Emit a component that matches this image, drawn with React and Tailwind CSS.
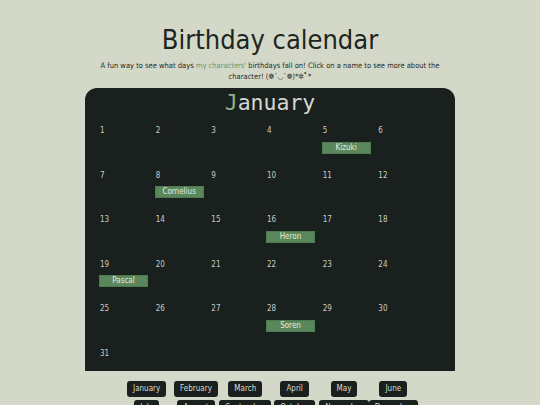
import React from "react";

const birthdays = {
  5: "Kizuki",
  8: "Cornelius",
  16: "Heron",
  19: "Pascal",
  28: "Soren",
};

const months = [
  "January", "February", "March", "April", "May", "June",
  "July", "August", "September", "October", "November", "December",
];

function DayCell({ day }) {
  const name = birthdays[day];
  return (
    <div className="h-[44.6px] flex flex-col items-start">
      <span className="text-[8px] leading-[10px] text-[#c9ccc5] pl-[1px]">{day}</span>
      {name && (
        <button className="mt-[5.5px] w-[49px] h-[12px] bg-[#5a875c] border border-[#4d7a50] text-[#e4ecdf] text-[8px] leading-[10px] text-center">
          {name}
        </button>
      )}
    </div>
  );
}

export default function App() {
  const days = Array.from({ length: 31 }, (_, i) => i + 1);

  return (
    <div className="min-h-[405px] bg-[#d4d8c9] font-['DejaVu_Sans',sans-serif] [font-stretch:condensed] text-[#1d2420] overflow-hidden">
      <h1 className="pt-[24px] text-center text-[27px] leading-[31px] text-[#1c2520]">Birthday calendar</h1>
      <p className="mt-[5px] mx-auto w-[346px] text-center text-[7.5px] leading-[11px] text-[#252b26]">
        A fun way to see what days <a className="text-[#6b956b]">my characters'</a> birthdays fall on! Click on a name to see more about the character! (❁´◡`❁)*✲ﾟ*
      </p>

      <div className="mx-auto mt-[6px] w-[370px] h-[283px] bg-[#1a201d] rounded-t-[12px] pt-[1px] pl-[14px]">
        <h2 className="text-center font-['DejaVu_Sans_Mono',monospace] text-[21.5px] leading-[28px] text-[#d3d8d0] pr-[14px]">
          <span className="text-[#8fb08a]">J</span>anuary
        </h2>
        <div className="mt-[9px] w-[334px] grid grid-cols-6">
          {days.map((d) => (
            <DayCell key={d} day={d} />
          ))}
        </div>
      </div>

      <div className="mx-auto mt-[10px] w-[296px] grid grid-cols-6 gap-y-[3px] justify-items-center">
        {months.map((m) => (
          <button
            key={m}
            className="h-[16px] px-[6px] rounded-[3px] bg-[#1a201d] text-[#d8ddd4] text-[8px] leading-[16px] whitespace-nowrap"
          >
            {m}
          </button>
        ))}
      </div>
    </div>
  );
}
